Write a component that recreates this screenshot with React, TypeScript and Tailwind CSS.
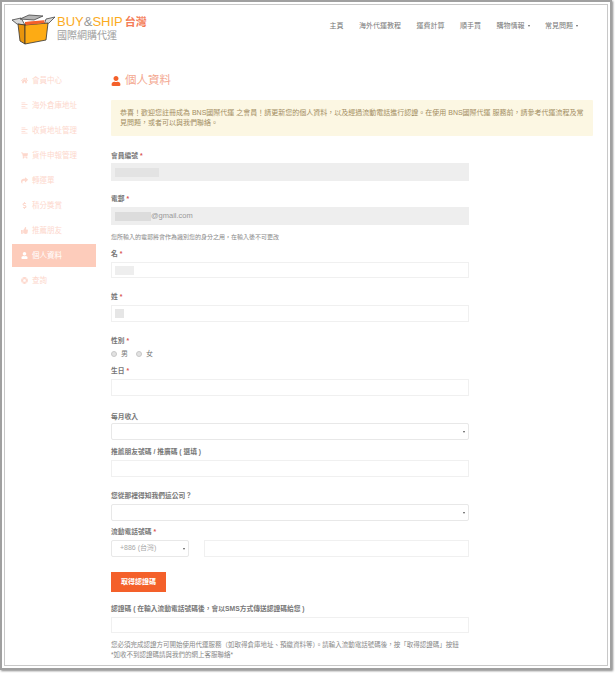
import { FaAlignLeft, FaDollarSign, FaHome, FaLifeRing, FaShare, FaShoppingCart, FaThumbsUp, FaUser } from 'react-icons/fa'

const NAV_ITEMS = [
  { label: '主頁' },
  { label: '海外代運教程' },
  { label: '運費計算' },
  { label: '順手買' },
  { label: '購物情報', caret: true },
  { label: '常見問題', caret: true },
]

const SIDE_ITEMS = [
  { label: '會員中心', icon: FaHome },
  { label: '海外倉庫地址', icon: FaAlignLeft },
  { label: '收貨地址管理', icon: FaAlignLeft },
  { label: '貨件申報管理', icon: FaShoppingCart },
  { label: '轉運單', icon: FaShare },
  { label: '積分獎賞', icon: FaDollarSign },
  { label: '推薦朋友', icon: FaThumbsUp },
  { label: '個人資料', icon: FaUser, active: true },
  { label: '查詢', icon: FaLifeRing },
]

function Logo() {
  return (
    <svg width="45" height="32" viewBox="0 0 45 32" className="shrink-0">
      <path d="M13 9 L34 7 L24 11 L13 12 Z" fill="#f4602a" />
      <path d="M0 7 L9 5 L13 12 L5 11 Z" fill="#d8d8d8" stroke="#444" strokeWidth="0.8" />
      <path d="M34 6 L43 4 L37 10 L32 12 Z" fill="#d8d8d8" stroke="#444" strokeWidth="0.8" />
      <path d="M8 6 L17 2 L31 3 L22 7 Z" fill="#b5b5b5" stroke="#444" strokeWidth="0.8" />
      <path d="M13 12 L13 31 L8 28 L6 11 Z" fill="#e8940c" stroke="#333" strokeWidth="0.8" />
      <path d="M13 12 L36 10 L34 27 L13 31 Z" fill="#fdab14" stroke="#333" strokeWidth="0.8" />
      <path d="M14 9 L32 8 L33 10 L14 12 Z" fill="#f4602a" />
    </svg>
  )
}

function Label({ text, required, className }: { text: string; required?: boolean; className: string }) {
  return (
    <div className={`h-[10px] text-[6.75px] leading-[10px] font-bold text-[#777] ${className}`}>
      {text}
      {required && <span className="text-[#d9534f]"> *</span>}
    </div>
  )
}

function Input({ className, children }: { className: string; children?: React.ReactNode }) {
  return <div className={`flex items-center border ${className}`}>{children}</div>
}

function Select({ className, children }: { className: string; children?: React.ReactNode }) {
  return (
    <div className={`h-[17px] flex items-center justify-between pr-[3px] border border-[#e8e8e8] rounded-[2px] bg-white ${className}`}>
      <span className="text-[7px] text-[#a8a8a8] pl-[8px]">{children}</span>
      <span className="w-0 h-0 border-x-[1.5px] border-x-transparent border-t-[2px] border-t-[#555]" />
    </div>
  )
}

export default function App() {
  return (
    <div className="w-[616px] h-[674px] bg-white [font-family:'Liberation_Sans','Noto_Sans_CJK_TC',sans-serif]">
      <div className="w-[612px] h-[670px] border-2 border-[#a0a0a0] p-[2px] bg-white shadow-[1px_1px_2px_#888]">
        <div className="h-full border border-[#c8c8c8] bg-white overflow-hidden">
          {/* Header */}
          <header className="h-[64px] flex items-start justify-between pl-[7px]">
            <div className="flex items-start pt-[8px]">
              <Logo />
              <div className="flex flex-col pt-[2px]">
                <div className="flex items-baseline leading-[14px] text-[13px] text-[#fbab1e]">
                  <span>BUY</span>
                  <span className="text-[#999]">&amp;</span>
                  <span>SHIP</span>
                  <span className="text-[11px] font-bold text-[#f47b55] ml-[2px]">台灣</span>
                </div>
                <span className="text-[10px] leading-[12px] text-[#a0a0a0] mt-[1px]">國際網購代運</span>
              </div>
            </div>
            <nav className="flex gap-[15.5px] pt-[16px] pr-[29px] text-[7px] leading-[10px] text-[#777]">
              {NAV_ITEMS.map(({ label, caret }) => (
                <span key={label} className="flex items-center gap-[3px]">
                  {label}
                  {caret && <span className="w-0 h-0 border-x-[1.5px] border-x-transparent border-t-[2px] border-t-[#666]" />}
                </span>
              ))}
            </nav>
          </header>

          <div className="flex">
            {/* Sidebar */}
            <aside className="w-[84px] ml-[7px] shrink-0 flex flex-col gap-[2px]">
              {SIDE_ITEMS.map(({ label, icon: Icon, active }) => (
                <div
                  key={label}
                  className={`h-[23px] flex items-center gap-[4px] pl-[9px] text-[7.5px] ${
                    active ? 'bg-[#fdccbb] text-white' : 'text-[#fdd8cd]'
                  }`}
                >
                  <Icon className="w-[7px] h-[7px] shrink-0" />
                  {label}
                </div>
              ))}
            </aside>

            {/* Content */}
            <main className="ml-[15px] w-[482px] shrink-0">
              <h1 className="h-[23px] flex items-center gap-[4px] text-[11.5px] font-normal text-[#f3a78f]">
                <FaUser className="w-[10px] h-[10px] text-[#f4602a]" />
                個人資料
              </h1>
              <div className="mt-[8px] h-[36px] px-[9px] py-[8px] bg-[#fcf7e3] rounded-[1px] text-[7px] leading-[10px] text-[#a38d62] whitespace-nowrap">
                恭喜！歡迎您註冊成為 BNS國際代運 之會員！請更新您的個人資料，以及經過流動電話進行認證。在使用 BNS國際代運 服務前，請參考代運流程及常
                <br />
                見問題，或者可以與我們聯絡。
              </div>

              <Label text="會員編號" required className="mt-[15px] mb-[2px]" />
              <Input className="w-[358px] h-[18px] bg-[#eeeeee] border-[#eeeeee]">
                <span className="ml-[3px] w-[44px] h-[9px] bg-[#e3e3e3]" />
              </Input>

              <Label text="電郵" required className="mt-[13px] mb-[3px]" />
              <Input className="w-[358px] h-[18px] bg-[#eeeeee] border-[#eeeeee] text-[7.5px] text-[#999]">
                <span className="ml-[3px] w-[36px] h-[9px] bg-[#dcdcdc]" />
                @gmail.com
              </Input>
              <div className="mt-[7px] h-[10px] text-[6px] leading-[10px] text-[#888]">
                您所輸入的電郵將會作為識別您的身分之用，在輸入後不可更改
              </div>

              <Label text="名" required className="mt-[7px] mb-[3px]" />
              <Input className="w-[358px] h-[16px] bg-white border-[#f0f0f0]">
                <span className="ml-[3px] w-[19px] h-[9px] bg-[#eeeeee]" />
              </Input>

              <Label text="姓" required className="mt-[14px] mb-[3px]" />
              <Input className="w-[358px] h-[17px] bg-white border-[#f0f0f0]">
                <span className="ml-[3px] w-[9px] h-[9px] bg-[#e6e6e6]" />
              </Input>

              <Label text="性別" required className="mt-[14px]" />
              <div className="mt-[3px] h-[10px] flex items-center text-[7px] text-[#777]">
                <span className="w-[6px] h-[6px] rounded-full bg-[#e2e2e2] border border-[#c8c8c8]" />
                <span className="ml-[4px]">男</span>
                <span className="ml-[8px] w-[6px] h-[6px] rounded-full bg-[#e2e2e2] border border-[#c8c8c8]" />
                <span className="ml-[4px]">女</span>
              </div>

              <Label text="生日" required className="mt-[7px] mb-[3px]" />
              <Input className="w-[358px] h-[17px] bg-white border-[#f0f0f0]" />

              <Label text="每月收入" className="mt-[16px] mb-[1px]" />
              <Select className="w-[358px]" />

              <Label text="推薦朋友號碼 / 推廣碼 ( 選填 )" className="mt-[7px] mb-[3px]" />
              <Input className="w-[358px] h-[17px] bg-white border-[#f0f0f0]" />

              <Label text="您從那裡得知我們這公司？" className="mt-[14px] mb-[3px]" />
              <Select className="w-[358px]" />

              <Label text="流動電話號碼" required className="mt-[6px] mb-[3px]" />
              <div className="flex gap-[15px]">
                <Select className="w-[78px]">+886 (台灣)</Select>
                <Input className="w-[265px] h-[17px] bg-white border-[#f0f0f0]" />
              </div>

              <button
                type="button"
                className="mt-[15px] w-[55px] h-[20px] bg-[#f4602a] text-white text-[7px] font-bold flex items-center justify-center"
              >
                取得認證碼
              </button>

              <Label text="認證碼 ( 在輸入流動電話號碼後，會以SMS方式傳送認證碼給您 )" className="mt-[12px] mb-[3px]" />
              <Input className="w-[358px] h-[16px] bg-white border-[#f0f0f0]" />

              <div className="mt-[7px] text-[6.5px] leading-[10px] text-[#888] whitespace-nowrap">
                您必須完成認證方可開始使用代運服務（如取得倉庫地址、預繳資料等）。請輸入流動電話號碼後，按「取得認證碼」按鈕
                <br />
                *如收不到認證碼請與我們的網上客服聯絡*
              </div>
            </main>
          </div>
        </div>
      </div>
    </div>
  )
}
